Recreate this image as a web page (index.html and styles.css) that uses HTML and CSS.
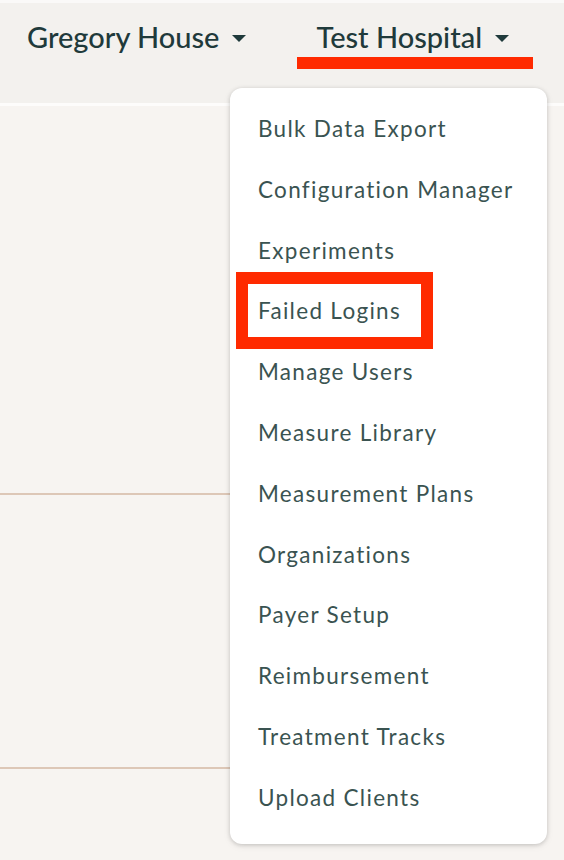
FILE: index.html
```html
<!DOCTYPE html>
<html lang="en">
<head>
<meta charset="utf-8">
<title>Admin menu</title>
<link rel="stylesheet" href="styles.css">
</head>
<body>
<header class="topbar">
  <nav class="nav">
    <div class="nav-item">Gregory House <span class="caret"></span></div>
    <div class="nav-item nav-item--active">Test Hospital <span class="caret"></span></div>
  </nav>
</header>
<main class="content">
  <div class="row row--first"></div>
  <div class="row row--second"></div>
</main>
<div class="dropdown">
  <ul class="menu">
    <li class="menu-item">Bulk Data Export</li>
    <li class="menu-item">Configuration Manager</li>
    <li class="menu-item">Experiments</li>
    <li class="menu-item">Failed Logins</li>
    <li class="menu-item">Manage Users</li>
    <li class="menu-item">Measure Library</li>
    <li class="menu-item">Measurement Plans</li>
    <li class="menu-item">Organizations</li>
    <li class="menu-item">Payer Setup</li>
    <li class="menu-item">Reimbursement</li>
    <li class="menu-item">Treatment Tracks</li>
    <li class="menu-item">Upload Clients</li>
  </ul>
  <div class="highlight-box"></div>
</div>
</body>
</html>
```

FILE: styles.css
```css
* { box-sizing: border-box; }
html, body { margin: 0; padding: 0; }
body {
  width: 564px;
  height: 860px;
  overflow: hidden;
  background: #f7f4f1;
  font-family: Lato, "Open Sans", sans-serif;
  position: relative;
}
.topbar {
  height: 106px;
  background: #f3f1ee;
  border-top: 3px solid #faf9f8;
  border-bottom: 3px solid #fdfcfb;
}
.nav {
  display: flex;
  align-items: center;
  gap: 70px;
  padding: 17px 0 0 27px;
}
.nav-item {
  position: relative;
  display: flex;
  align-items: center;
  gap: 13px;
  font-size: 29px;
  font-weight: 500;
  color: #1f3a3b;
  line-height: 34px;
}
.caret {
  width: 0;
  height: 0;
  border-left: 7px solid transparent;
  border-right: 7px solid transparent;
  border-top: 7px solid #1f3a3b;
  margin-top: 3px;
}
.nav-item--active::after {
  content: "";
  position: absolute;
  left: -19px;
  right: -24px;
  top: 37px;
  height: 12px;
  background: #ff2a00;
}
.content { width: 230px; }
.row { border-bottom: 2px solid #ddc7b7; }
.row--first { height: 389px; }
.row--second { height: 274px; }
.dropdown {
  position: absolute;
  left: 230px;
  top: 88px;
  width: 317px;
  height: 756px;
  background: #ffffff;
  border-radius: 12px;
  box-shadow: 0 1px 4px rgba(0, 0, 0, 0.18), 0 2px 8px rgba(0, 0, 0, 0.06);
}
.menu {
  list-style: none;
  margin: 0;
  padding: 11px 0 15px 28px;
}
.menu-item {
  height: 60.8px;
  line-height: 60.8px;
  font-size: 22.5px;
  letter-spacing: 1.3px;
  color: #3a5351;
  white-space: nowrap;
}
.highlight-box {
  position: absolute;
  left: 6px;
  top: 184px;
  width: 197px;
  height: 77px;
  border: 12px solid #ff2a00;
}
```
